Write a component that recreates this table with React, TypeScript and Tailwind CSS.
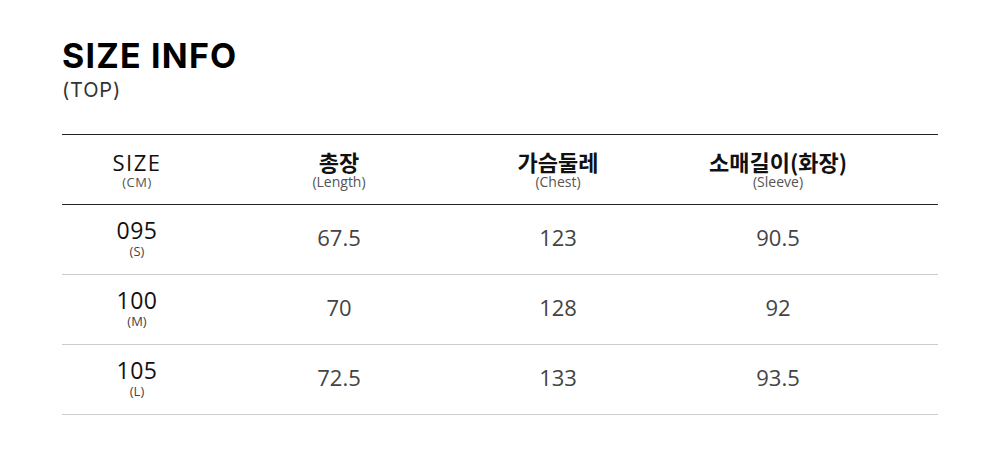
import React from "react";

const rows = [
  { size: "095", label: "(S)", v: ["67.5", "123", "90.5"] },
  { size: "100", label: "(M)", v: ["70", "128", "92"] },
  { size: "105", label: "(L)", v: ["72.5", "133", "93.5"] },
];

const heads = [
  { k: "총장", e: "(Length)" },
  { k: "가슴둘레", e: "(Chest)" },
  { k: "소매길이(화장)", e: "(Sleeve)" },
];

const grid = "grid grid-cols-[150px_254px_184px_256px_1fr] items-center h-[70px]";

export default function App() {
  return (
    <div
      className="w-[1000px] h-[459px] bg-white px-[62px] pt-[38px]"
      style={{ fontFamily: '"Open Sans", "Noto Sans CJK KR", sans-serif' }}
    >
      <div
        className="text-[34px] leading-[36px] font-bold text-black tracking-[1.2px]"
        style={{ fontFamily: 'Inter, "Noto Sans CJK KR", sans-serif' }}
      >
        SIZE INFO
      </div>
      <div
        className="text-[20px] leading-[22px] text-[#333] mt-[5px] tracking-[0.8px]"
        style={{ fontFamily: 'Inter, sans-serif' }}
      >
        (TOP)
      </div>

      <div className="mt-[33px] w-[876px] border-t border-[#222]">
        <div className={grid + " border-b border-[#222]"}>
          <div className="flex flex-col items-center">
            <span className="text-[22px] leading-[22px] text-[#111] tracking-[1.5px]">SIZE</span>
            <span className="text-[13px] leading-[14px] text-[#555] mt-[2px] tracking-[0.5px]">(CM)</span>
          </div>
          {heads.map((h) => (
            <div key={h.k} className="flex flex-col items-center pb-[2px]">
              <span
                className="text-[22px] leading-[24px] font-bold text-[#111]"
                style={{ fontFamily: '"Noto Sans CJK KR", sans-serif' }}
              >
                {h.k}
              </span>
              <span className="text-[14px] leading-[14px] text-[#555] mt-[2px]">{h.e}</span>
            </div>
          ))}
          <div />
        </div>
        {rows.map((r) => (
          <div key={r.size} className={grid + " border-b border-[#ccc]"}>
            <div className="flex flex-col items-center pb-[2px]">
              <span className="text-[23px] leading-[23px] text-[#111] font-medium tracking-[0.5px]">{r.size}</span>
              <span className="text-[13px] leading-[13px] text-[#444] mt-[3px]">{r.label}</span>
            </div>
            {r.v.map((x, i) => (
              <div key={i} className="text-center text-[22px] leading-[24px] text-[#444] pb-[6px]">
                {x}
              </div>
            ))}
            <div />
          </div>
        ))}
      </div>
    </div>
  );
}
